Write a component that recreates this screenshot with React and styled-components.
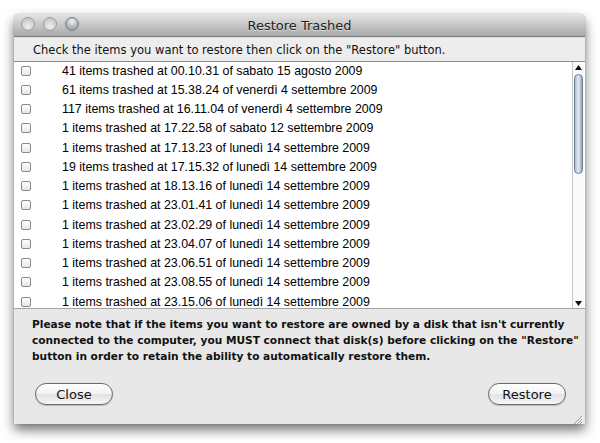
import React from 'react';
import styled, { createGlobalStyle } from 'styled-components';

const items = [
    '41 items trashed at 00.10.31 of sabato 15 agosto 2009',
    '61 items trashed at 15.38.24 of venerdì 4 settembre 2009',
    '117 items trashed at 16.11.04 of venerdì 4 settembre 2009',
    '1 items trashed at 17.22.58 of sabato 12 settembre 2009',
    '1 items trashed at 17.13.23 of lunedì 14 settembre 2009',
    '19 items trashed at 17.15.32 of lunedì 14 settembre 2009',
    '1 items trashed at 18.13.16 of lunedì 14 settembre 2009',
    '1 items trashed at 23.01.41 of lunedì 14 settembre 2009',
    '1 items trashed at 23.02.29 of lunedì 14 settembre 2009',
    '1 items trashed at 23.04.07 of lunedì 14 settembre 2009',
    '1 items trashed at 23.06.51 of lunedì 14 settembre 2009',
    '1 items trashed at 23.08.55 of lunedì 14 settembre 2009',
    '1 items trashed at 23.15.06 of lunedì 14 settembre 2009',
];

const noteLines = [
    "Please note that if the items you want to restore are owned by a disk that isn't currently",
    'connected to the computer, you MUST connect that disk(s) before clicking on the "Restore"',
    'button in order to retain the ability to automatically restore them.',
];

const App = () => {
    return (
        <Page>
            <GlobalStyle />
            <Window>
                <TitleBar>
                    <Lights>
                        <Light />
                        <Light />
                        <Light $dark />
                    </Lights>
                    <Title>Restore Trashed</Title>
                </TitleBar>
                <Instruction>Check the items you want to restore then click on the "Restore" button.</Instruction>
                <ListArea>
                    <List>
                        {items.map((item, i) => (
                            <Row key={i}>
                                <Check />
                                <RowText>{item}</RowText>
                            </Row>
                        ))}
                    </List>
                    <Scrollbar>
                        <Arrow>
                            <svg width="7" height="5" viewBox="0 0 7 5">
                                <path d="M3.5 0 L7 5 L0 5 Z" fill="#111" />
                            </svg>
                        </Arrow>
                        <Track>
                            <Thumb />
                        </Track>
                        <Arrow>
                            <svg width="7" height="5" viewBox="0 0 7 5">
                                <path d="M0 0 L7 0 L3.5 5 Z" fill="#111" />
                            </svg>
                        </Arrow>
                    </Scrollbar>
                </ListArea>
                <Footer>
                    <Note>
                        {noteLines.map((line, i) => (
                            <NoteLine key={i}>{line}</NoteLine>
                        ))}
                    </Note>
                    <Buttons>
                        <Button>Close</Button>
                        <Button>Restore</Button>
                    </Buttons>
                </Footer>
                <Grip>
                    <svg width="11" height="11" viewBox="0 0 11 11">
                        <path d="M10 2 L2 10 M10 5 L5 10 M10 8 L8 10" stroke="#999" strokeWidth="1" />
                        <path d="M11 3 L3 11 M11 6 L6 11 M11 9 L9 11" stroke="#fff" strokeWidth="1" />
                    </svg>
                </Grip>
            </Window>
        </Page>
    );
};

export default App;

const GlobalStyle = createGlobalStyle`
    html, body {
        margin: 0;
        padding: 0;
        background: #ffffff;
    }
`;

const Page = styled.div`
    width: 600px;
    height: 443px;
    padding: 14px 0 0 14px;
    box-sizing: border-box;
    overflow: hidden;
`;

const Window = styled.div`
    position: relative;
    width: 571px;
    height: 410px;
    display: flex;
    flex-direction: column;
    background: #e8e8e8;
    border-radius: 5px 5px 0 0;
    box-shadow: 0 6px 12px rgba(0, 0, 0, 0.55), 0 0 1px rgba(0, 0, 0, 0.5);
    overflow: hidden;
`;

const TitleBar = styled.div`
    height: 22px;
    flex: none;
    display: flex;
    align-items: center;
    justify-content: center;
    position: relative;
    background: linear-gradient(#e4e4e4, #a9a9a9);
    border-bottom: 1px solid #7c7c7c;
`;

const Lights = styled.div`
    position: absolute;
    left: 7px;
    top: 3px;
    display: flex;
    gap: 8px;
`;

const Light = styled.div`
    width: 14px;
    height: 14px;
    border-radius: 50%;
    box-sizing: border-box;
    border: 1px solid ${(p) => (p.$dark ? '#7a7f86' : '#9c9c9c')};
    background: ${(p) =>
        p.$dark
            ? 'radial-gradient(circle at 50% 30%, #f4f6f8 0%, #b8bec6 45%, #8b929b 100%)'
            : 'radial-gradient(circle at 50% 70%, #f0f0f0 0%, #d4d4d4 50%, #b9b9b9 100%)'};
`;

const Title = styled.div`
    font-family: 'DejaVu Sans', sans-serif;
    font-size: 13px;
    color: #222;
    text-shadow: 0 1px 0 rgba(255, 255, 255, 0.5);
`;

const Instruction = styled.div`
    height: 23px;
    flex: none;
    display: flex;
    align-items: center;
    padding-left: 19px;
    background: #ededed;
    border-top: 1px solid #dedede;
    border-bottom: 1px solid #8e8e8e;
    font-family: 'DejaVu Sans', sans-serif;
    font-size: 11.5px;
    color: #111;
`;

const ListArea = styled.div`
    height: 246px;
    flex: none;
    display: flex;
    background: #ffffff;
    border-bottom: 1px solid #a5a5a5;
`;

const List = styled.div`
    flex: 1;
    overflow: hidden;
    margin-top: -1px;
`;

const Row = styled.div`
    height: 19.25px;
    display: flex;
    align-items: center;
`;

const Check = styled.div`
    width: 10px;
    height: 10px;
    margin-left: 7px;
    margin-right: 31px;
    box-sizing: border-box;
    border: 1px solid #8a8a8a;
    border-radius: 2px;
    background: linear-gradient(#ffffff, #e6e6e6);
`;

const RowText = styled.span`
    font-family: 'Liberation Sans', Arial, sans-serif;
    font-size: 12.4px;
    color: #000;
    white-space: nowrap;
`;

const Scrollbar = styled.div`
    width: 11px;
    flex: none;
    margin-right: 1px;
    display: flex;
    flex-direction: column;
    border-left: 1px solid #c8c8c8;
    background: #fafafa;
`;

const Arrow = styled.div`
    height: 10px;
    display: flex;
    align-items: center;
    justify-content: center;
`;

const Track = styled.div`
    flex: 1;
    padding-top: 2px;
`;

const Thumb = styled.div`
    width: 9px;
    height: 100px;
    margin-left: 1px;
    box-sizing: border-box;
    border-radius: 5px;
    border: 1px solid #6f7f95;
    background: linear-gradient(90deg, #a8b8cc, #e4ebf3 45%, #c4d0de 70%, #8e9fb6);
`;

const Footer = styled.div`
    flex: 1;
    display: flex;
    flex-direction: column;
    padding: 7px 18px 0 18px;
`;

const Note = styled.div`
    font-family: 'DejaVu Sans', sans-serif;
    font-weight: bold;
    font-size: 10.6px;
    line-height: 16px;
    color: #111;
`;

const NoteLine = styled.div`
    white-space: nowrap;
`;

const Buttons = styled.div`
    display: flex;
    justify-content: space-between;
    margin-top: 19px;
    padding: 0 1px 0 3px;
`;

const Button = styled.button`
    width: 78px;
    height: 22px;
    border-radius: 11px;
    border: 1px solid #6a6a6a;
    background: linear-gradient(#ffffff, #f2f2f2 50%, #e2e2e2 51%, #f6f6f6);
    font-family: 'DejaVu Sans', sans-serif;
    font-size: 13px;
    color: #111;
    padding: 0;
    box-shadow: 0 1px 1px rgba(0, 0, 0, 0.2);
`;

const Grip = styled.div`
    position: absolute;
    right: 2px;
    bottom: 2px;
    width: 11px;
    height: 11px;
`;
